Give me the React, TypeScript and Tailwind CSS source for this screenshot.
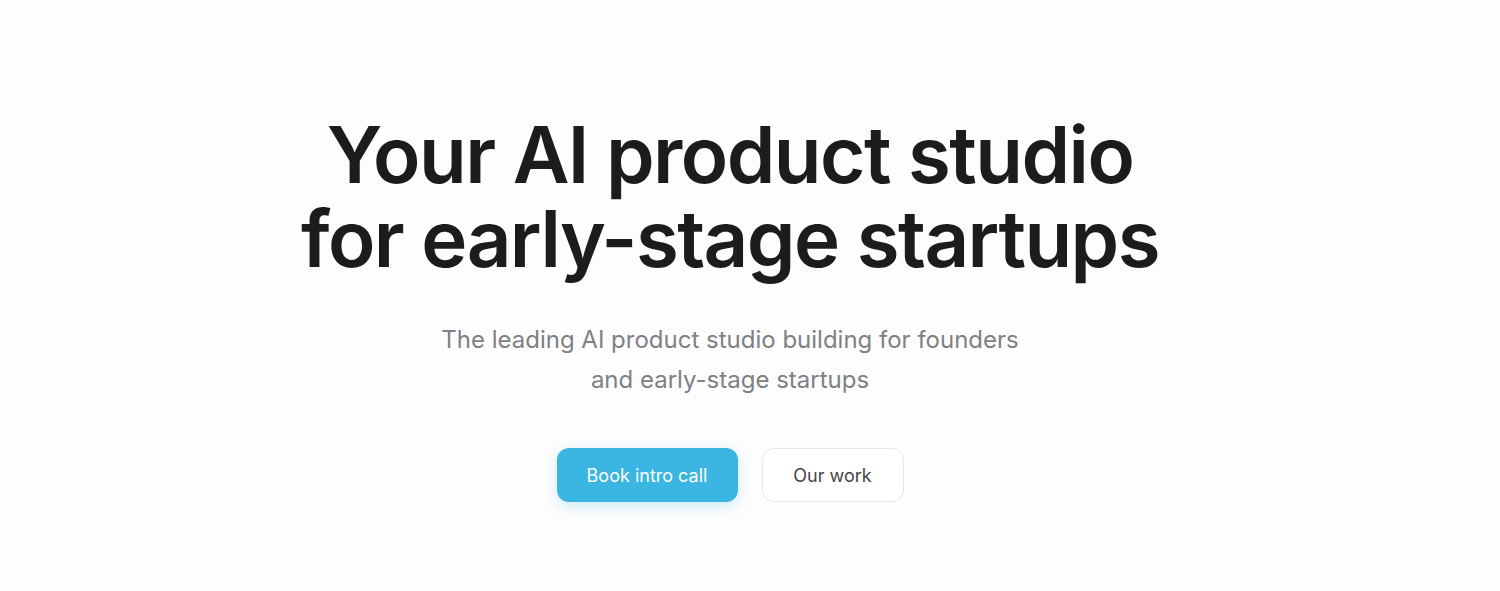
export default function App() {
  return (
    <div className="min-h-[591px] w-full bg-[#fdfdfd]" style={{ fontFamily: "Inter, 'Noto Sans', sans-serif" }}>
      <div className="flex w-[1460px] flex-col items-center pt-[113px]">
        <h1 className="text-center text-[78px] font-semibold leading-[84px] tracking-[-0.02em] text-[#1c1c1e]">
          Your AI product studio
          <br />
          for early-stage startups
        </h1>
        <p className="mt-[39px] text-center text-[24px] leading-[40px] text-[#808084]">
          The leading AI product studio building for founders
          <br />
          and early-stage startups
        </p>
        <div className="mt-[48px] flex gap-[24px]">
          <button className="h-[54px] w-[181px] rounded-[12px] bg-[#3bb5e2] text-[18px] font-normal text-white shadow-[0_4px_14px_rgba(59,181,226,0.25)]">
            Book intro call
          </button>
          <button className="h-[54px] w-[142px] rounded-[12px] border border-[#e6e6e8] bg-white text-[18px] font-normal text-[#454548]">
            Our work
          </button>
        </div>
      </div>
    </div>
  );
}
